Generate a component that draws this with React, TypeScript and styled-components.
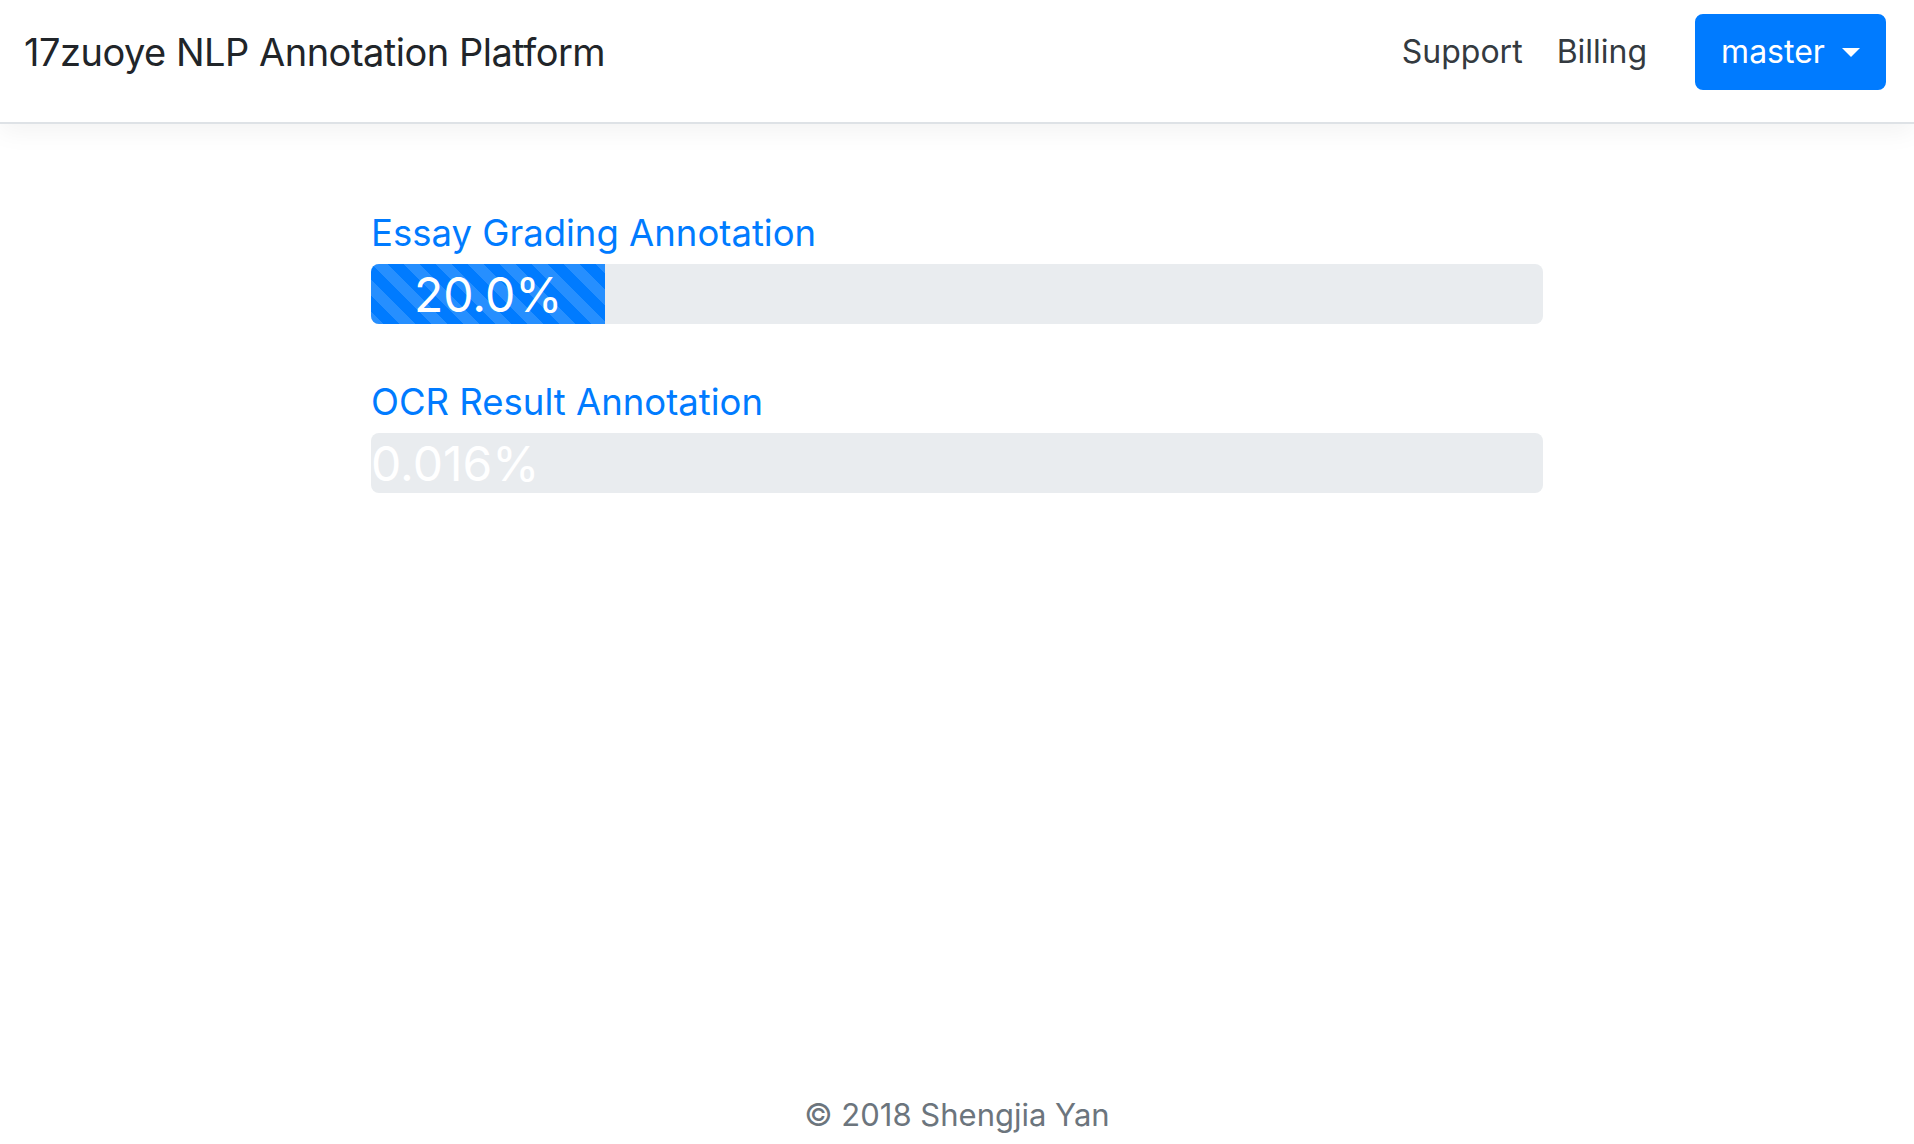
import React from "react";
import styled, { createGlobalStyle } from "styled-components";

const GlobalStyle = createGlobalStyle`
  html, body {
    margin: 0;
    padding: 0;
    background: #ffffff;
    font-family: Inter, "Noto Sans", "Liberation Sans", sans-serif;
    color: #212529;
  }
  * { box-sizing: border-box; }
`;

const Page = styled.div`
  min-height: 100vh;
  display: flex;
  flex-direction: column;
`;

const Header = styled.header`
  display: flex;
  align-items: center;
  padding: 14px 28px 32px 24px;
  background: #ffffff;
  border-bottom: 2px solid #dee2e6;
  box-shadow: 0 8px 24px rgba(0, 0, 0, 0.05);
`;

const Brand = styled.h5`
  margin: 0 auto 0 0;
  font-size: 38px;
  line-height: 48px;
  letter-spacing: -0.5px;
  font-weight: 400;
  color: #212529;
`;

const Nav = styled.nav`
  display: flex;
  gap: 2px;
  margin-right: 32px;
`;

const NavLink = styled.a`
  padding: 0 16px;
  font-size: 32px;
  line-height: 48px;
  color: #343a40;
  text-decoration: none;
`;

const DropdownButton = styled.button`
  display: inline-flex;
  align-items: center;
  padding: 12px 24px;
  font-family: inherit;
  font-size: 32px;
  line-height: 48px;
  color: #ffffff;
  background: #007bff;
  border: 2px solid #007bff;
  border-radius: 8px;
  white-space: pre;

  &::after {
    content: "";
    display: inline-block;
    margin-left: 0.255em;
    border-top: 0.3em solid #ffffff;
    border-right: 0.3em solid transparent;
    border-left: 0.3em solid transparent;
    border-bottom: 0;
  }
`;

const Main = styled.main`
  width: 1172px;
  margin: 0 auto;
  padding-top: 88px;
  display: flex;
  flex-direction: column;
  gap: 57px;
`;

const Task = styled.section`
  display: flex;
  flex-direction: column;
  gap: 10px;
`;

const TaskLink = styled.a`
  font-size: 36.5px;
  line-height: 42px;
  color: #007bff;
  text-decoration: none;
`;

const Progress = styled.div`
  display: flex;
  height: 60px;
  overflow: hidden;
  background: #e9ecef;
  border-radius: 8px;
  font-size: 48px;
`;

const ProgressFill = styled.div`
  display: flex;
  flex-direction: column;
  justify-content: center;
  text-align: center;
  white-space: nowrap;
  color: #ffffff;
  background-color: #007bff;
  background-image: linear-gradient(
    45deg,
    rgba(255, 255, 255, 0.15) 25%,
    transparent 25%,
    transparent 50%,
    rgba(255, 255, 255, 0.15) 50%,
    rgba(255, 255, 255, 0.15) 75%,
    transparent 75%,
    transparent
  );
  background-size: 32px 32px;
`;

const Footer = styled.footer`
  margin-top: auto;
  padding-bottom: 5px;
  text-align: center;
  font-size: 31px;
  line-height: 48px;
  color: #6c757d;
`;

const tasks = [
  { name: "Essay Grading Annotation", pct: 20.0, label: "20.0%" },
  { name: "OCR Result Annotation", pct: 0.016, label: "0.016%" },
];

export default function App() {
  return (
    <Page>
      <GlobalStyle />
      <Header>
        <Brand>17zuoye NLP Annotation Platform</Brand>
        <Nav>
          <NavLink href="#">Support</NavLink>
          <NavLink href="#">Billing</NavLink>
        </Nav>
        <DropdownButton type="button">master </DropdownButton>
      </Header>
      <Main>
        {tasks.map((t) => (
          <Task key={t.name}>
            <TaskLink href="#">{t.name}</TaskLink>
            <Progress>
              <ProgressFill style={{ width: `${Math.round(t.pct * 10) / 10}%` }}>{t.label}</ProgressFill>
            </Progress>
          </Task>
        ))}
      </Main>
      <Footer>© 2018 Shengjia Yan</Footer>
    </Page>
  );
}
